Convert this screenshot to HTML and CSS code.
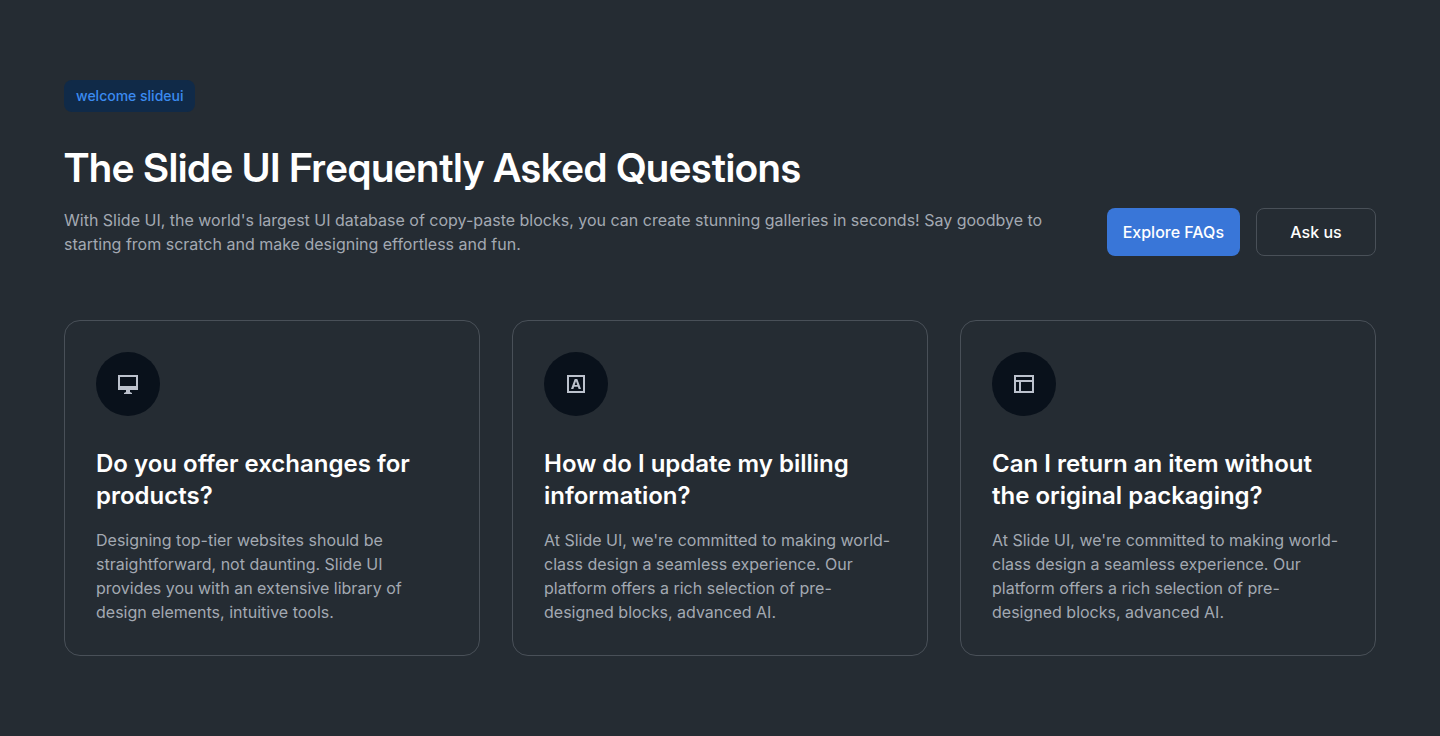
FILE: index.html
```html
<!DOCTYPE html>
<html lang="en">
<head>
  <meta charset="utf-8">
  <meta name="viewport" content="width=device-width, initial-scale=1">
  <title>Slide UI FAQ</title>
  <link rel="stylesheet" href="styles.css">
</head>
<body>
  <main class="faq">
    <header class="intro">
      <span class="badge">welcome slideui</span>
      <h1 class="title">The Slide UI Frequently Asked Questions</h1>
      <div class="intro-row">
        <p class="text lead">With Slide UI, the world's largest UI database of copy-paste blocks, you can create stunning galleries in seconds! Say goodbye to starting from scratch and make designing effortless and fun.</p>
        <div class="actions">
          <button class="button button-primary" type="button">Explore FAQs</button>
          <button class="button button-outline" type="button">Ask us</button>
        </div>
      </div>
    </header>
    <section class="cards">
      <article class="card">
        <div class="icon">
          <svg viewBox="0 0 24 24" width="24" height="24" fill="currentColor" aria-hidden="true"><path fill-rule="evenodd" d="M2 3h20v15h-8v2l2 1v1H8v-1l2-1v-2H2zm2 2v9h16V5z"/></svg>
        </div>
        <h2 class="card-title">Do you offer exchanges for products?</h2>
        <p class="text">Designing top-tier websites should be straightforward, not daunting. Slide UI provides you with an extensive library of design elements, intuitive tools.</p>
      </article>
      <article class="card">
        <div class="icon">
          <svg viewBox="0 0 24 24" width="24" height="24" fill="currentColor" aria-hidden="true"><path fill-rule="evenodd" d="M3 3h18v18H3zm2 2v14h14V5z"/><path fill-rule="evenodd" d="M10.700 7h2.600L17 17h-2.400l-.7-2.200h-3.800L9.400 17H7zm1.300 2.300L10.700 13h2.600z"/></svg>
        </div>
        <h2 class="card-title">How do I update my billing information?</h2>
        <p class="text">At Slide UI, we're committed to making world-class design a seamless experience. Our platform offers a rich selection of pre-designed blocks, advanced AI.</p>
      </article>
      <article class="card">
        <div class="icon">
          <svg viewBox="0 0 24 24" width="24" height="24" fill="currentColor" aria-hidden="true"><path fill-rule="evenodd" d="M2 3h20v18H2zm2 2v3h16V5zm0 5v9h3v-9zm5 0v9h11v-9z"/></svg>
        </div>
        <h2 class="card-title">Can I return an item without the original packaging?</h2>
        <p class="text">At Slide UI, we're committed to making world-class design a seamless experience. Our platform offers a rich selection of pre-designed blocks, advanced AI.</p>
      </article>
    </section>
  </main>
</body>
</html>
```
FILE: styles.css
```css
* {
  box-sizing: border-box;
}

body {
  margin: 0;
  background: #252c33;
  color: #ffffff;
  font-family: Inter, "Liberation Sans", sans-serif;
  font-size: 16px;
  line-height: 24px;
}

h1,
h2,
p {
  margin: 0;
}

.faq {
  display: flex;
  flex-direction: column;
  gap: 64px;
  padding: 80px 64px;
}

.intro {
  display: flex;
  flex-direction: column;
  gap: 16px;
}

.badge {
  align-self: flex-start;
  margin-bottom: 16px;
  padding: 4px 12px;
  border-radius: 8px;
  background: #102a48;
  color: #3b8bf0;
  font-size: 14px;
  font-weight: 500;
}

.title {
  font-family: "Inter Display", Inter, "Liberation Sans", sans-serif;
  font-size: 40px;
  font-weight: 600;
  line-height: 48px;
}

.intro-row {
  display: flex;
  justify-content: space-between;
  align-items: flex-end;
  gap: 64px;
}

.text {
  color: #a3a9b2;
}

.lead {
  flex: 1;
}

.actions {
  display: flex;
  gap: 16px;
}

.button {
  height: 48px;
  padding: 0 16px;
  border: 0;
  border-radius: 8px;
  color: #ffffff;
  font: inherit;
  font-weight: 500;
}

.button-primary {
  background: #3976d8;
}

.button-outline {
  min-width: 120px;
  border: 1px solid #495058;
  background: transparent;
}

.cards {
  display: grid;
  grid-template-columns: repeat(3, 1fr);
  gap: 32px;
}

.card {
  padding: 31px;
  border: 1px solid #495058;
  border-radius: 16px;
}

.icon {
  display: flex;
  align-items: center;
  justify-content: center;
  width: 64px;
  height: 64px;
  margin-bottom: 32px;
  border-radius: 50%;
  background: #09111b;
  color: #bcc2cd;
}

.card-title {
  margin-bottom: 16px;
  font-size: 24px;
  font-weight: 600;
  line-height: 32px;
}

@media (max-width: 900px) {
  .cards {
    grid-template-columns: 1fr;
  }

  .intro-row {
    flex-direction: column;
    align-items: flex-start;
    gap: 24px;
  }
}
```
